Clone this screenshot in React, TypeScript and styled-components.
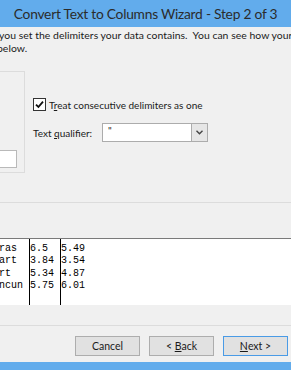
import React from "react";
import styled, { createGlobalStyle } from "styled-components";

const Global = createGlobalStyle`
  html, body { margin: 0; padding: 0; background: #f0f0f0; }
  body { width: 291px; height: 370px; overflow: hidden; font-family: Lato, "Liberation Sans", sans-serif; }
`;

const Window = styled.div`
  width: 291px;
  height: 370px;
  overflow: hidden;
  display: flex;
  flex-direction: column;
  background: #f0f0f0;
  color: #1a1a1a;
`;

const TitleBar = styled.div`
  height: 27px;
  flex: none;
  background: #62acec;
  display: flex;
  align-items: center;
  justify-content: center;
  font-size: 13.8px;
  letter-spacing: -0.25px;
  color: #2b2b2b;
  white-space: nowrap;
`;

const Body = styled.div`
  flex: 1;
  display: flex;
  flex-direction: column;
  font-size: 10px;
  min-height: 0;
`;

const Intro = styled.div`
  margin-top: 2px;
  line-height: 13px;
  font-size: 10.4px;
  letter-spacing: 0.04px;
  white-space: pre;
`;

const IntroLine = styled.div<{ $indent: number }>`
  margin-left: ${(p) => p.$indent}px;
`;

const Options = styled.div`
  margin-top: 16px;
  height: 102px;
  display: flex;
  flex: none;
`;

const LeftGroup = styled.div`
  margin-left: -30px;
  width: 55px;
  flex: none;
  box-sizing: border-box;
  border: 1px solid #dcdcdc;
  padding: 78px 7px 0 0;
`;

const TextBox = styled.div`
  height: 18px;
  box-sizing: border-box;
  border: 1px solid #b9b9b9;
  background: #fff;
`;

const RightCol = styled.div`
  margin-left: 8px;
  padding-top: 27px;
  display: flex;
  flex-direction: column;
`;

const CheckRow = styled.label`
  display: flex;
  align-items: center;
  height: 13px;
  gap: 3px;
  white-space: nowrap;
`;

const CheckBox = styled.span`
  width: 13px;
  height: 13px;
  box-sizing: border-box;
  border: 1px solid #333;
  background: #fff;
  display: flex;
  align-items: center;
  justify-content: center;
  flex: none;
`;

const QualRow = styled.div`
  margin-top: 12px;
  height: 19px;
  display: flex;
  align-items: center;
`;

const QualLabel = styled.span`
  width: 69px;
  flex: none;
  white-space: nowrap;
`;

const Select = styled.div`
  width: 106px;
  height: 19px;
  box-sizing: border-box;
  border: 1px solid #acacac;
  background: #fff;
  display: flex;
`;

const SelectValue = styled.span`
  flex: 1;
  padding: 1px 0 0 5px;
  line-height: 10px;
  font-size: 10px;
`;

const SelectButton = styled.span`
  width: 15px;
  flex: none;
  border-left: 1px solid #acacac;
  background: #e6e6e6;
  display: flex;
  align-items: center;
  justify-content: center;
`;

const PreviewGroup = styled.div`
  margin: 29px -20px 0 -20px;
  height: 124px;
  flex: none;
  box-sizing: border-box;
  border-top: 1px solid #dcdcdc;
  border-bottom: 1px solid #dcdcdc;
  padding: 35px 0 0 20px;
`;

const Preview = styled.div`
  height: 67px;
  box-sizing: border-box;
  border-top: 1px solid #7a7a7a;
  background: #fff;
  display: flex;
  overflow: hidden;
`;

const Column = styled.div<{ $width: number; $offset?: number; $rule?: boolean }>`
  flex: none;
  width: ${(p) => p.$width}px;
  margin-left: ${(p) => p.$offset ?? 0}px;
  box-sizing: border-box;
  border-left: ${(p) => (p.$rule ? "1px solid #000" : "none")};
  padding-top: 4px;
  font-family: "Liberation Mono", monospace;
  font-size: 10px;
  line-height: 12.3px;
  white-space: pre;
  color: #000;
`;

const ButtonRow = styled.div`
  margin-top: 10px;
  display: flex;
  justify-content: flex-end;
  gap: 9px;
  padding-right: 3px;
`;

const Button = styled.button<{ $default?: boolean }>`
  width: 65px;
  height: 20px;
  box-sizing: border-box;
  border: 1px solid ${(p) => (p.$default ? "#4a9be6" : "#adadad")};
  background: #e1e1e1;
  font-family: inherit;
  font-size: 10.5px;
  color: #1a1a1a;
  padding: 0;
  display: flex;
  align-items: center;
  justify-content: center;
`;

const FrameBottom = styled.div`
  height: 8px;
  flex: none;
  background: #62acec;
`;

const rows = [
  ["Boras", "6.5", "5.49"],
  ["Evart", "3.84", "3.54"],
  ["Fort", "5.34", "4.87"],
  ["Cancun", "5.75", "6.01"],
];

export default function App() {
  return (
    <>
      <Global />
      <Window>
        <TitleBar>Convert Text to Columns Wizard - Step 2 of 3</TitleBar>
        <Body>
          <Intro>
            <IntroLine $indent={-1}>you set the delimiters your data contains.  You can see how your</IntroLine>
            <IntroLine $indent={-3}>below.</IntroLine>
          </Intro>
          <Options>
            <LeftGroup>
              <TextBox />
            </LeftGroup>
            <RightCol>
              <CheckRow>
                <CheckBox>
                  <svg width="9" height="9" viewBox="0 0 9 9">
                    <path d="M1 4.6 L3.4 7 L8 1.6" fill="none" stroke="#111" strokeWidth="1.8" />
                  </svg>
                </CheckBox>
                <span>
                  T<u>r</u>eat consecutive delimiters as one
                </span>
              </CheckRow>
              <QualRow>
                <QualLabel>
                  Text <u>q</u>ualifier:
                </QualLabel>
                <Select>
                  <SelectValue>"</SelectValue>
                  <SelectButton>
                    <svg width="7" height="5" viewBox="0 0 7 5">
                      <path d="M0.5 0.8 L3.5 3.8 L6.5 0.8" fill="none" stroke="#444" strokeWidth="1.4" />
                    </svg>
                  </SelectButton>
                </Select>
              </QualRow>
            </RightCol>
          </Options>
          <PreviewGroup>
            <Preview>
              <Column $width={42} $offset={-13}>
                {rows.map((r) => r[0]).join("\n")}
              </Column>
              <Column $width={31} $rule>
                {rows.map((r) => r[1]).join("\n")}
              </Column>
              <Column $width={80} $rule>
                {rows.map((r) => r[2]).join("\n")}
              </Column>
            </Preview>
          </PreviewGroup>
          <ButtonRow>
            <Button>Cancel</Button>
            <Button>
              &lt;&nbsp;<u>B</u>ack
            </Button>
            <Button $default>
              <u>N</u>ext&nbsp;&gt;
            </Button>
          </ButtonRow>
        </Body>
        <FrameBottom />
      </Window>
    </>
  );
}
